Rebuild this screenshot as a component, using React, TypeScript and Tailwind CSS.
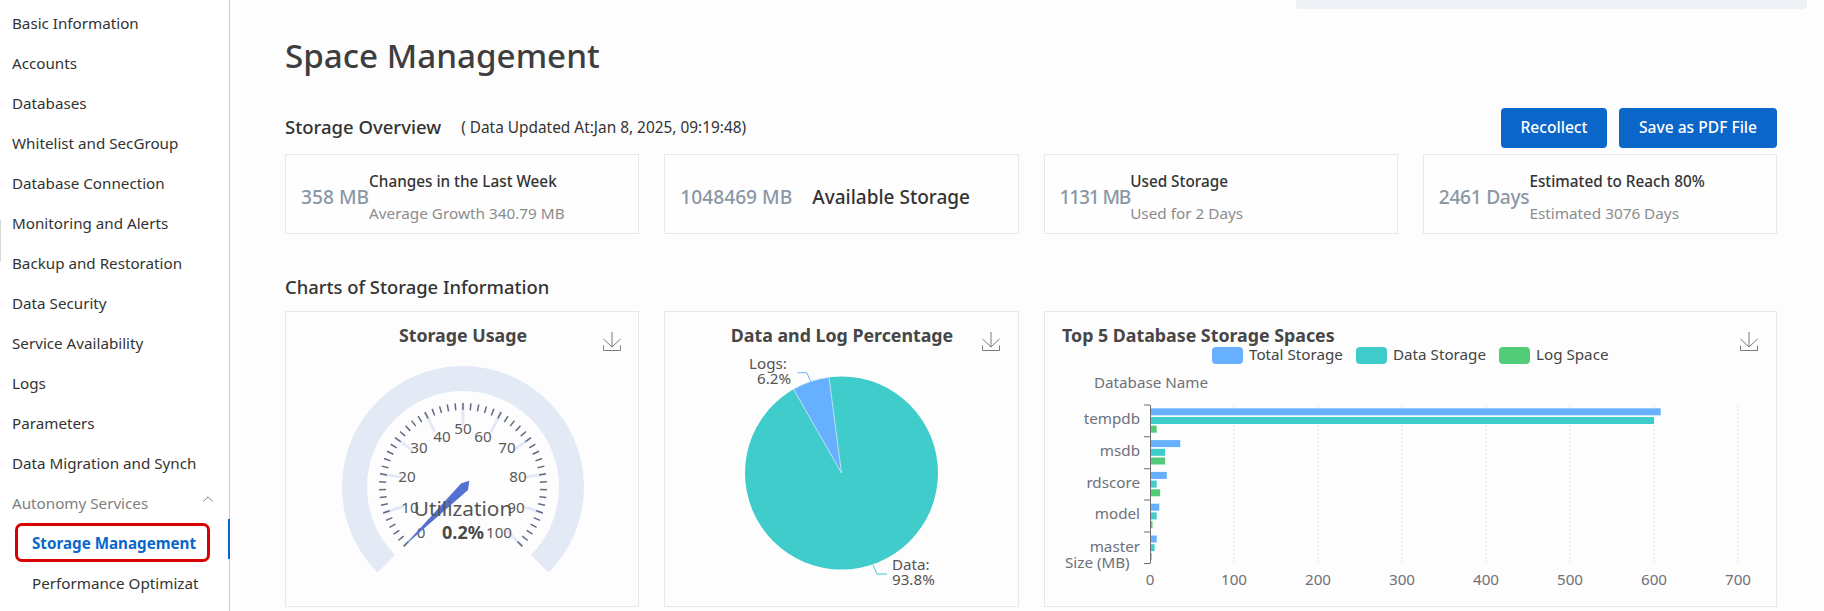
import { ChevronUp } from "lucide-react"

const NAV_ITEMS = [
  "Basic Information",
  "Accounts",
  "Databases",
  "Whitelist and SecGroup",
  "Database Connection",
  "Monitoring and Alerts",
  "Backup and Restoration",
  "Data Security",
  "Service Availability",
  "Logs",
  "Parameters",
  "Data Migration and Synch",
]

const STATS = [
  { value: "358 MB", title: "Changes in the Last Week", sub: "Average Growth 340.79 MB" },
  { value: "1048469 MB", title: "Available Storage" },
  { value: "1131 MB", title: "Used Storage", sub: "Used for 2 Days", valueClass: "tracking-[-1.2px]" },
  { value: "2461 Days", title: "Estimated to Reach 80%", sub: "Estimated 3076 Days", valueClass: "tracking-[-0.3px]" },
]

const BLUE = "#66b0ff"
const TEAL = "#40cccb"
const GREEN = "#52cc78"
const FONT = "'Noto Sans', sans-serif"
const LABEL_SIZE = "15.2"

// x axis of the bar chart: 84px per 100 MB, zero at x=1150
const toX = (mb: number) => (mb * 84) / 100

const BARS = [
  { name: "tempdb", labelY: 419, total: 608, data: 600, log: 8 },
  { name: "msdb", labelY: 451, total: 36, data: 18, log: 18 },
  { name: "rdscore", labelY: 483, total: 20, data: 8, log: 12 },
  { name: "model", labelY: 514, total: 11, data: 8, log: 3 },
  { name: "master", labelY: 547, total: 8, data: 5.5, log: 2 },
]

const GAUGE_LABELS = [
  { t: "0", x: 421, y: 532 },
  { t: "10", x: 410, y: 507 },
  { t: "20", x: 407, y: 476 },
  { t: "30", x: 419, y: 447 },
  { t: "40", x: 442, y: 436 },
  { t: "50", x: 463, y: 428 },
  { t: "60", x: 483, y: 436 },
  { t: "70", x: 507, y: 447 },
  { t: "80", x: 518, y: 476 },
  { t: "90", x: 516, y: 507 },
  { t: "100", x: 499, y: 532 },
]

function polar(cx: number, cy: number, r: number, value: number) {
  const a = ((225 - value * 2.7) * Math.PI) / 180
  return { x: cx + r * Math.cos(a), y: cy - r * Math.sin(a) }
}

function DownloadIcon({ x }: { x: number }) {
  return (
    <path
      transform={`translate(${x} 332)`}
      d="M9 0V15M0.5 7L9 15L17.5 7M0.5 13.5V18.5H17.5V13.5"
      fill="none"
      stroke="#7a7a7a"
      strokeWidth="1"
    />
  )
}

function ChartTitle({ x, anchor, children }: { x: number; anchor?: "middle"; children: string }) {
  return (
    <text x={x} y={342} textAnchor={anchor} fontSize="17.8" fontWeight="700" fill="#464646">
      {children}
    </text>
  )
}

function GaugeChart() {
  const cx = 463
  const cy = 487
  const start = polar(cx, cy, 108.5, 0)
  const end = polar(cx, cy, 108.5, 100)
  const ticks = Array.from({ length: 51 }, (_, i) => i * 2)

  return (
    <svg width="352" height="294" viewBox="286 312 352 294" className="block" style={{ fontFamily: FONT }}>
      <ChartTitle x={463} anchor="middle">Storage Usage</ChartTitle>
      <DownloadIcon x={603} />
      <path
        d={`M${start.x} ${start.y}A108.5 108.5 0 1 1 ${end.x} ${end.y}`}
        fill="none"
        stroke="#e3e9f5"
        strokeWidth="25"
      />
      {ticks.filter((v) => v % 10 === 0).map((v) => {
        const a = polar(cx, cy, 62, v)
        const b = polar(cx, cy, 84, v)
        return <line key={v} x1={a.x} y1={a.y} x2={b.x} y2={b.y} stroke="#e3e9f5" strokeWidth="3" />
      })}
      {ticks.map((v) => {
        const a = polar(cx, cy, 77, v)
        const b = polar(cx, cy, 84, v)
        return <line key={v} x1={a.x} y1={a.y} x2={b.x} y2={b.y} stroke="#646a82" strokeWidth="1.5" />
      })}
      {GAUGE_LABELS.map((l) => (
        <text key={l.t} x={l.x} y={l.y + 5.5} textAnchor="middle" fontSize={LABEL_SIZE} fill="#5a5a5a">
          {l.t}
        </text>
      ))}
      <polygon points="404,546 461,483.5 469.3,480.7 468,490" fill="#5470d0" />
      <text x={463} y={516} textAnchor="middle" fontSize="20.8" fill="#555555">Utilization</text>
      <text x={463} y={539} textAnchor="middle" fontSize="18" fontWeight="700" fill="#4a4a4a">0.2%</text>
    </svg>
  )
}

function PieChart() {
  return (
    <svg width="352" height="294" viewBox="665 312 352 294" className="block" style={{ fontFamily: FONT }}>
      <ChartTitle x={842} anchor="middle">Data and Log Percentage</ChartTitle>
      <DownloadIcon x={982} />
      <circle cx="841.5" cy="473" r="96.5" fill={TEAL} />
      <path d="M841.5 473L829 377.3A96.5 96.5 0 0 0 793.5 389.2Z" fill={BLUE} stroke="#d9f0f2" strokeWidth="0.75" />
      <path d="M797.7 372.7H806.7L811 381.7" fill="none" stroke={BLUE} />
      <path d="M873 565L877 574H887" fill="none" stroke={TEAL} />
      <text x={768} y={369} textAnchor="middle" fontSize={LABEL_SIZE} fill="#555555">Logs:</text>
      <text x={774} y={384} textAnchor="middle" fontSize={LABEL_SIZE} fill="#555555">6.2%</text>
      <text x={892} y={570} fontSize={LABEL_SIZE} fill="#555555">Data:</text>
      <text x={892} y={585} fontSize={LABEL_SIZE} fill="#555555">93.8%</text>
    </svg>
  )
}

function BarChart() {
  const legend = [
    { label: "Total Storage", color: BLUE, x: 1212 },
    { label: "Data Storage", color: TEAL, x: 1356 },
    { label: "Log Space", color: GREEN, x: 1499 },
  ]
  const axisTicks = [405, 436.7, 468.7, 500, 532, 563.5]
  const xLabels = [0, 100, 200, 300, 400, 500, 600, 700]

  return (
    <svg width="731" height="294" viewBox="1045 312 731 294" className="block" style={{ fontFamily: FONT }}>
      <ChartTitle x={1062}>Top 5 Database Storage Spaces</ChartTitle>
      <DownloadIcon x={1740} />
      {legend.map((l) => (
        <g key={l.label}>
          <rect x={l.x} y={347} width={31} height={17} rx={4} fill={l.color} />
          <text x={l.x + 37} y={359.5} fontSize={LABEL_SIZE} fill="#444444">{l.label}</text>
        </g>
      ))}
      <text x={1094} y={387.5} fontSize={LABEL_SIZE} fill="#6e7079">Database Name</text>
      {xLabels.map((v) => (
        <g key={v}>
          {v > 0 && (
            <line x1={1150 + toX(v)} y1={405} x2={1150 + toX(v)} y2={563} stroke="#dfe4f2" strokeDasharray="2 2" />
          )}
          <text x={1150 + toX(v)} y={584.5} textAnchor="middle" fontSize={LABEL_SIZE} fill="#6e7079">{v}</text>
        </g>
      ))}
      {BARS.map((b, i) => {
        const top = 408.3 + i * 31.8
        return (
          <g key={b.name}>
            <rect x={1150} y={top} width={toX(b.total)} height={7} fill={BLUE} />
            <rect x={1150} y={top + 8.7} width={toX(b.data)} height={7} fill={TEAL} />
            <rect x={1150} y={top + 17.4} width={toX(b.log)} height={7} fill={GREEN} />
            <text x={1140} y={b.labelY + 4.5} textAnchor="end" fontSize={LABEL_SIZE} fill="#6e7079">{b.name}</text>
          </g>
        )
      })}
      <line x1={1150.5} y1={405} x2={1150.5} y2={563.5} stroke="#6e7079" />
      {axisTicks.map((y) => (
        <line key={y} x1={1144} y1={y} x2={1150} y2={y} stroke="#6e7079" />
      ))}
      <text x={1065} y={568} fontSize={LABEL_SIZE} fill="#6e7079">Size (MB)</text>
    </svg>
  )
}

function StatCard({ value, title, sub, valueClass }: { value: string; title: string; sub?: string; valueClass?: string }) {
  return (
    <div className="flex h-20 items-center border border-[#e8e8e8] bg-white/40 pl-[15px] pt-[6px]">
      <span className={`whitespace-nowrap text-[19.2px] font-medium text-[#8a97a5] ${valueClass ?? ""}`}>{value}</span>
      {sub ? (
        <div className="whitespace-nowrap text-[15.3px] leading-8">
          <div className="font-medium text-[#333333]">{title}</div>
          <div className="text-[#8c8c8c]">{sub}</div>
        </div>
      ) : (
        <div className="ml-5 whitespace-nowrap text-[19px] font-medium text-[#333333]">{title}</div>
      )}
    </div>
  )
}

export default function App() {
  return (
    <div
      className="flex h-[611px] w-[1824px] overflow-hidden bg-[#fdfdfd] text-[#333333]"
      style={{ fontFamily: FONT }}
    >
      {/* Sidebar */}
      <aside className="relative h-full w-[230px] shrink-0 border-r border-[#c9ccd4] bg-white pt-[3px] text-[15.2px]">
        <div className="absolute left-0 top-[220px] h-[42px] w-[1px] bg-[#d8d8d8]" />
        {NAV_ITEMS.map((item) => (
          <div key={item} className="flex h-10 items-center whitespace-nowrap pl-3">
            {item}
          </div>
        ))}
        <div className="flex h-10 items-center justify-between pl-3 pr-[12px] text-[#808080]">
          <span>Autonomy Services</span>
          <ChevronUp className="mb-2 h-[18px] w-[18px]" strokeWidth={1.3} />
        </div>
        <div className="relative flex h-10 items-center pl-[32px]">
          <span className="font-bold text-[#0a66c9]">Storage Management</span>
          <div className="absolute right-[-1px] top-[-4px] h-10 w-[2px] bg-[#0a66c9]" />
          <div className="absolute left-[15px] top-0 h-[39px] w-[195px] rounded-[7px] border-[3px] border-[#d90000]" />
        </div>
        <div className="flex h-10 items-center pl-[32px]">
          <span className="w-[167px] overflow-hidden whitespace-nowrap">Performance Optimization</span>
        </div>
      </aside>

      {/* Main */}
      <main className="min-w-0 flex-1 pl-[55px] pr-[47px]">
        <div className="mr-[-30px] flex justify-end">
          <div className="h-[9px] w-[511px] rounded-b-sm bg-[#edf0f5]" />
        </div>
        <h1 className="mt-[27px] whitespace-nowrap text-[33.2px] font-medium leading-10 text-[#3e3e3e]">Space Management</h1>

        <div className="mt-8 flex h-10 items-start justify-between">
          <div className="flex items-center leading-9">
            <h2 className="text-[18.5px] font-medium text-[#333333]">Storage Overview</h2>
            <span className="ml-5 pt-[2px] text-[15.4px]">( Data Updated At:Jan 8, 2025, 09:19:48)</span>
          </div>
          <div className="flex gap-3">
            <button className="h-10 w-[106px] rounded-sm bg-[#0a66c9] text-[15.6px] font-medium text-white">Recollect</button>
            <button className="h-10 w-[158px] rounded-sm bg-[#0a66c9] text-[15.6px] font-medium text-white">Save as PDF File</button>
          </div>
        </div>

        <div className="mt-[6px] grid grid-cols-4 gap-[25px]">
          {STATS.map((s) => (
            <StatCard key={s.value} {...s} />
          ))}
        </div>

        <h2 className="mt-[41px] text-[18.4px] font-medium leading-6 text-[#333333]">Charts of Storage Information</h2>

        <div className="mt-3 grid grid-cols-4 gap-[25px]">
          <div className="h-[296px] border border-[#e8e8e8]"><GaugeChart /></div>
          <div className="h-[296px] border border-[#e8e8e8]"><PieChart /></div>
          <div className="col-span-2 h-[296px] border border-[#e8e8e8]"><BarChart /></div>
        </div>
      </main>
    </div>
  )
}
